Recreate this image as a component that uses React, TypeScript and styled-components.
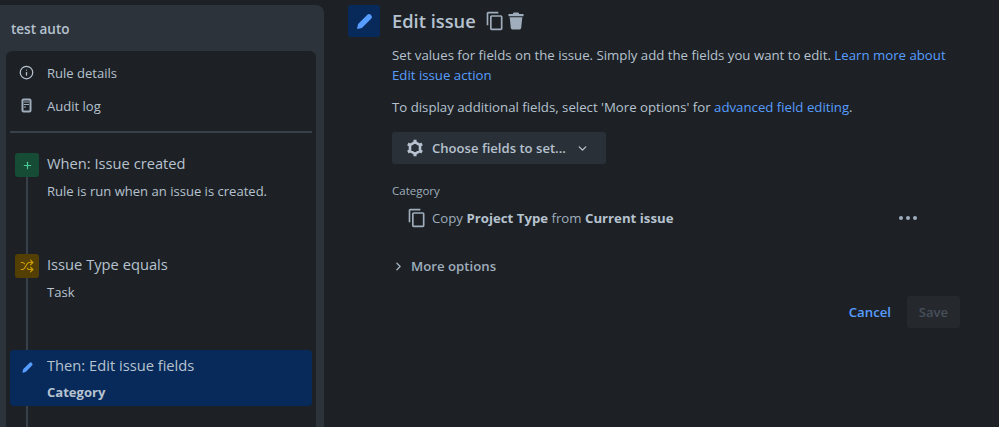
import React from 'react';
import styled, { createGlobalStyle } from 'styled-components';
import { ChevronDown, ChevronRight, Info, Shuffle, Plus } from 'lucide-react';
import { MdContentCopy } from 'react-icons/md';

const GlobalStyle = createGlobalStyle`
  html, body {
    margin: 0;
    background: #1d2125;
  }
  body {
    font-family: "Open Sans", "Noto Sans", "Liberation Sans", sans-serif;
    font-size: 13.05px;
    color: #b6c2cf;
  }
`;

const Page = styled.div`
  display: flex;
  width: 999px;
  height: 427px;
  overflow: hidden;
`;

const Sidebar = styled.aside`
  display: flex;
  flex-direction: column;
  box-sizing: border-box;
  flex: none;
  width: 324px;
  height: 422px;
  margin-top: 5px;
  padding: 0 8px 0 6px;
  background: #2c333a;
  border-radius: 0 8px 0 0;
`;

const RuleName = styled.h1`
  margin: 0;
  padding: 14px 5px 0;
  height: 46px;
  box-sizing: border-box;
  font-size: 13.5px;
  line-height: 20px;
  font-weight: 600;
  color: #b6c2cf;
`;

const Nav = styled.div`
  flex: 1;
  display: flex;
  flex-direction: column;
  padding: 5px 4px 0;
  background: #1d2125;
  border-radius: 6px 6px 0 0;
`;

const NavItem = styled.div`
  display: flex;
  align-items: center;
  height: 33px;
  padding-left: 9px;
  gap: 13px;
`;

const NavIcon = styled.span`
  display: flex;
  justify-content: center;
  width: 15px;
`;

const Divider = styled.hr`
  width: 100%;
  height: 2px;
  margin: 9px 0 20px;
  border: 0;
  background: #38414a;
`;

const Step = styled.div<{ $height: number; $selected?: boolean }>`
  display: flex;
  gap: 8px;
  box-sizing: border-box;
  height: ${(p) => p.$height}px;
  padding: ${(p) => (p.$selected ? '5px' : '0')} 0 0 5px;
  border-radius: 4px;
  background: ${(p) => (p.$selected ? '#082a5a' : 'transparent')};
`;

const Rail = styled.div`
  display: flex;
  flex-direction: column;
  align-items: center;
  width: 24px;
`;

const Tile = styled.div<{ $bg: string; $fg: string }>`
  display: flex;
  align-items: center;
  justify-content: center;
  flex: none;
  width: 24px;
  height: 24px;
  border-radius: 3px;
  background: ${(p) => p.$bg};
  color: ${(p) => p.$fg};
`;

const Connector = styled.div`
  flex: 1;
  width: 2px;
  background: #38414a;
`;

const StepBody = styled.div`
  display: flex;
  flex-direction: column;
  margin-top: -1px;
`;

const StepTitle = styled.div`
  font-size: 14.7px;
  line-height: 22px;
`;

const StepText = styled.div<{ $bold?: boolean }>`
  margin-top: ${(p) => (p.$bold ? 6 : 7)}px;
  line-height: 20px;
  font-weight: ${(p) => (p.$bold ? 700 : 400)};
`;

const Tail = styled.div`
  flex: 1;
  display: flex;
  flex-direction: column;
  align-items: center;
  width: 24px;
  margin-left: 5px;
`;

const Main = styled.main`
  flex: 1;
  display: flex;
  flex-direction: column;
  padding: 5px 39px 0 24px;
  font-size: 13.22px;
`;

const Header = styled.header`
  display: flex;
  align-items: center;
  gap: 12px;
  height: 32px;
`;

const HeaderTile = styled.div`
  display: flex;
  align-items: center;
  justify-content: center;
  width: 32px;
  height: 32px;
  border-radius: 3px;
  background: #082a5a;
  color: #579dff;
`;

const Title = styled.h2`
  margin: 0;
  font-size: 18.3px;
  line-height: 32px;
  font-weight: 600;
  color: #b6c2cf;
`;

const HeaderActions = styled.div`
  display: flex;
  align-items: center;
  gap: 3px;
  margin-left: -3px;
  margin-top: -1px;
  color: #9fadbc;
`;

const Content = styled.div`
  display: flex;
  flex-direction: column;
  align-items: flex-start;
  padding-left: 44px;
`;

const Paragraph = styled.p<{ $top: number }>`
  margin: ${(p) => p.$top}px 0 0;
  line-height: 20px;
`;

const Link = styled.a`
  color: #579dff;
`;

const ChooseButton = styled.button`
  display: flex;
  align-items: center;
  box-sizing: border-box;
  width: 214px;
  height: 32px;
  margin-top: 15px;
  padding: 0 0 0 14px;
  border: 0;
  border-radius: 3px;
  background: #2a3037;
  color: #b6c2cf;
  font: 600 13.1px "Open Sans", sans-serif;
  gap: 8px;

  svg:last-child {
    margin-left: 2px;
  }
`;

const FieldLabel = styled.div`
  margin-top: 19px;
  font-size: 11.5px;
  line-height: 16px;
  color: #9fadbc;
`;

const FieldRow = styled.div`
  display: flex;
  align-items: center;
  justify-content: space-between;
  align-self: stretch;
  height: 20px;
  margin-top: 9px;
  padding: 0 43px 0 15px;
  box-sizing: border-box;
`;

const FieldText = styled.div`
  display: flex;
  align-items: center;
  gap: 5px;
  color: #9fadbc;

  strong {
    color: #b6c2cf;
    font-weight: 700;
  }
`;

const Dots = styled.div`
  display: flex;
  gap: 3px;
`;

const Dot = styled.span`
  width: 4px;
  height: 4px;
  border-radius: 50%;
  background: #9fadbc;
`;

const MoreOptions = styled.div`
  display: flex;
  align-items: center;
  gap: 6px;
  margin-top: 28px;
  line-height: 20px;
  font-weight: 600;
  color: #9fadbc;
`;

const Footer = styled.footer`
  display: flex;
  align-items: center;
  justify-content: flex-end;
  align-self: stretch;
  gap: 16px;
  margin-top: 20px;
`;

const CancelLink = styled.a`
  color: #579dff;
  font-weight: 600;
`;

const SaveButton = styled.button`
  width: 53px;
  height: 32px;
  padding: 0;
  border: 0;
  border-radius: 3px;
  background: #25292e;
  color: #454f59;
  font: 600 13.1px "Open Sans", sans-serif;
`;

const AuditIcon = () => (
  <svg width="11" height="15" viewBox="0 0 11 15" fill="none">
    <rect x="0.5" y="0.5" width="10" height="14" rx="2" fill="#9fadbc" />
    <rect x="2.5" y="2.5" width="6" height="10" fill="#1d2125" />
    <path d="M3 4h5M3 6.5h5M3 9h2" stroke="#9fadbc" />
  </svg>
);

const TrashIcon = () => (
  <svg width="16" height="18" viewBox="0 0 17 18" fill="#9fadbc">
    <path d="M6 0h5l1 1.5h4.5V4H.5V1.5H5z" />
    <path d="M1.8 5h13.4l-1.2 11.5c-.1.9-.8 1.5-1.6 1.5H4.6c-.8 0-1.5-.6-1.6-1.5z" />
  </svg>
);

const PencilIcon = ({ size }: { size: number }) => (
  <svg width={size} height={size} viewBox="0 0 24 24" fill="currentColor">
    <path d="M2.5 21.5l1.4-6.2L15.6 3.6a3.1 3.1 0 0 1 4.4 0l.4.4a3.1 3.1 0 0 1 0 4.4L8.7 20.1z" />
  </svg>
);

const GearIcon = () => (
  <svg width="18" height="18" viewBox="0 0 18 18" fill="none" stroke="currentColor">
    <path d="M9 3.2l5 2.9v5.8l-5 2.9-5-2.9V6.1z" strokeWidth="2.6" strokeLinejoin="round" />
    <path d="M9 .8v2.4M9 14.8v2.4M1.9 4.9l2.1 1.2M14 11.9l2.1 1.2M1.9 13.1l2.1-1.2M14 6.1l2.1-1.2" strokeWidth="3" />
  </svg>
);

const App: React.FC = () => {
  return (
    <Page>
      <GlobalStyle />
      <Sidebar>
        <RuleName>test auto</RuleName>
        <Nav>
          <NavItem>
            <NavIcon>
              <Info size={15} strokeWidth={2} />
            </NavIcon>
            Rule details
          </NavItem>
          <NavItem>
            <NavIcon>
              <AuditIcon />
            </NavIcon>
            Audit log
          </NavItem>
          <Divider />
          <Step $height={101}>
            <Rail>
              <Tile $bg="#164b35" $fg="#4bce97">
                <Plus size={11} strokeWidth={2.5} />
              </Tile>
              <Connector />
            </Rail>
            <StepBody>
              <StepTitle>When: Issue created</StepTitle>
              <StepText>Rule is run when an issue is created.</StepText>
            </StepBody>
          </Step>
          <Step $height={96}>
            <Rail>
              <Tile $bg="#533f04" $fg="#cf9f02">
                <Shuffle size={14} strokeWidth={2} />
              </Tile>
              <Connector />
            </Rail>
            <StepBody>
              <StepTitle>Issue Type equals</StepTitle>
              <StepText>Task</StepText>
            </StepBody>
          </Step>
          <Step $height={56} $selected>
            <Rail>
              <Tile $bg="transparent" $fg="#579dff">
                <PencilIcon size={13} />
              </Tile>
            </Rail>
            <StepBody>
              <StepTitle>Then: Edit issue fields</StepTitle>
              <StepText $bold>Category</StepText>
            </StepBody>
          </Step>
          <Tail>
            <Connector />
          </Tail>
        </Nav>
      </Sidebar>
      <Main>
        <Header>
          <HeaderTile>
            <PencilIcon size={19} />
          </HeaderTile>
          <Title>Edit issue</Title>
          <HeaderActions>
            <MdContentCopy size={20} />
            <TrashIcon />
          </HeaderActions>
        </Header>
        <Content>
          <Paragraph $top={8}>
            Set values for fields on the issue. Simply add the fields you want to edit.{' '}
            <Link>Learn more about Edit issue action</Link>
          </Paragraph>
          <Paragraph $top={12}>
            To display additional fields, select 'More options' for{' '}
            <Link>advanced field editing</Link>.
          </Paragraph>
          <ChooseButton>
            <GearIcon />
            Choose fields to set...
            <ChevronDown size={13} strokeWidth={2.5} />
          </ChooseButton>
          <FieldLabel>Category</FieldLabel>
          <FieldRow>
            <FieldText>
              <MdContentCopy size={20} />
              <span>
                Copy <strong>Project Type</strong> from <strong>Current issue</strong>
              </span>
            </FieldText>
            <Dots>
              <Dot />
              <Dot />
              <Dot />
            </Dots>
          </FieldRow>
          <MoreOptions>
            <ChevronRight size={13} strokeWidth={2.5} />
            More options
          </MoreOptions>
          <Footer>
            <CancelLink>Cancel</CancelLink>
            <SaveButton>Save</SaveButton>
          </Footer>
        </Content>
      </Main>
    </Page>
  );
};

export default App;
